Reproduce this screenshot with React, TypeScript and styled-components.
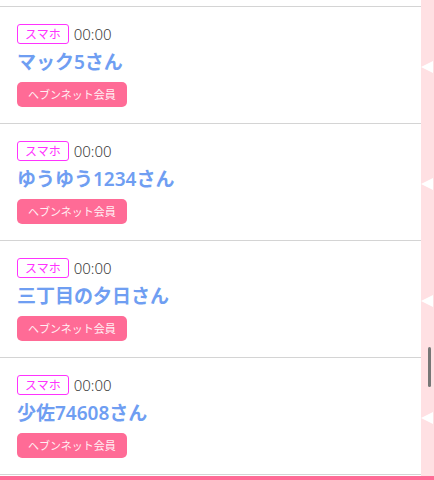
import styled, {createGlobalStyle} from "styled-components";

const GlobalStyle = createGlobalStyle`
    html, body {
        margin: 0;
        padding: 0;
        background: #fff;
        overflow: hidden;
    }
    body {
        font-family: "Noto Sans CJK JP", "Noto Sans", sans-serif;
    }
`

const members = [
    {device: "スマホ", time: "00:00", name: "マック5さん"},
    {device: "スマホ", time: "00:00", name: "ゆうゆう1234さん"},
    {device: "スマホ", time: "00:00", name: "三丁目の夕日さん"},
    {device: "スマホ", time: "00:00", name: "少佐74608さん"},
];

export default function App() {
    return (
        <Page>
            <GlobalStyle/>
            <Main>
                <List>
                    <TopGap/>
                    {members.map((m, i) => (
                        <Row key={i}>
                            <MetaLine>
                                <DeviceBadge>{m.device}</DeviceBadge>
                                <Time>{m.time}</Time>
                            </MetaLine>
                            <Name>{m.name}</Name>
                            <MemberButton>ヘブンネット会員</MemberButton>
                        </Row>
                    ))}
                    <ListEnd/>
                </List>
                <SideStrip>
                    <ScrollThumb/>
                </SideStrip>
            </Main>
            <Footer/>
        </Page>
    );
}

const Page = styled.div`
    width: 434px;
    height: 480px;
    overflow: hidden;
    display: flex;
    flex-direction: column;
`

const Main = styled.div`
    display: flex;
    height: 476px;
    flex-shrink: 0;
`

const List = styled.div`
    flex: 1;
    display: flex;
    flex-direction: column;
`

const TopGap = styled.div`
    height: 6px;
    flex-shrink: 0;
`

const Row = styled.div`
    position: relative;
    flex-shrink: 0;
    height: 116px;
    box-sizing: content-box;
    border-top: 1px solid #d4d4d4;
    padding: 0 17px;
    display: flex;
    flex-direction: column;
    align-items: flex-start;

    &::after {
        content: "";
        position: absolute;
        z-index: 2;
        left: 100%;
        top: 54px;
        border-style: solid;
        border-width: 6px 12px 6px 0;
        border-color: transparent #ffffff transparent transparent;
    }
`

const ListEnd = styled.div`
    border-top: 1px solid #d4d4d4;
    flex: 1;
`

const MetaLine = styled.div`
    display: flex;
    align-items: center;
    margin-top: 17px;
    height: 20px;
`

const DeviceBadge = styled.span`
    box-sizing: border-box;
    height: 20px;
    padding: 0 7px;
    border: 1px solid #ff33ff;
    border-radius: 3px;
    color: #ff33ff;
    font-size: 12px;
    line-height: 18px;
`

const Time = styled.span`
    margin-left: 5px;
    font-family: "Noto Sans", sans-serif;
    font-size: 15px;
    font-weight: 300;
    color: #3a3a3a;
    line-height: 20px;
`

const Name = styled.div`
    margin-top: 5px;
    font-family: "Noto Sans", "Noto Sans CJK JP", sans-serif;
    font-size: 19px;
    font-weight: 600;
    color: #6f9ef2;
    line-height: 26px;
`

const MemberButton = styled.div`
    margin-top: 7px;
    height: 25px;
    padding: 0 11px;
    border-radius: 5px;
    background: #ff6b96;
    color: #fff0f4;
    font-size: 11px;
    line-height: 25px;
`

const SideStrip = styled.div`
    position: relative;
    width: 13px;
    flex-shrink: 0;
    background: #ffe0e3;
`

const ScrollThumb = styled.div`
    position: absolute;
    left: 7px;
    top: 347px;
    width: 3px;
    height: 40px;
    border-radius: 2px;
    background: #777;
`

const Footer = styled.div`
    height: 20px;
    flex-shrink: 0;
    background: #ff6b96;
`
